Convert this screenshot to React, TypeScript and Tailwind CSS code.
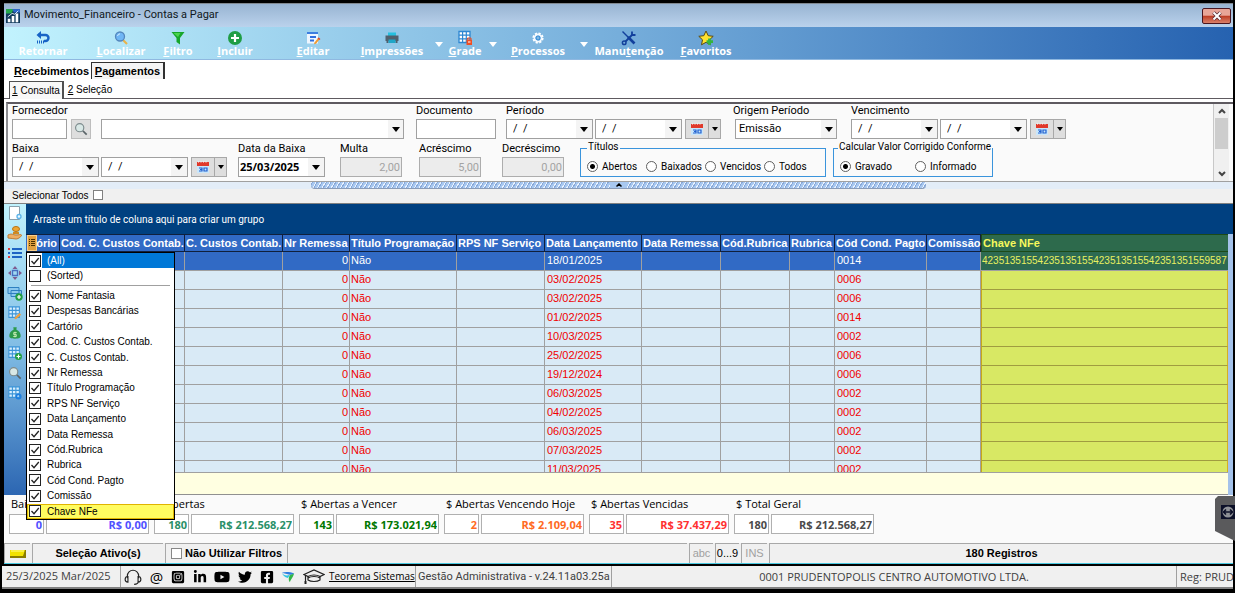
import { useState } from "react";
import type { ReactNode } from "react";
import { FaFacebookSquare, FaInstagramSquare, FaLinkedinIn, FaTwitter, FaYoutube } from "react-icons/fa";

const columns = [
    { title: "ório", width: 34 },
    { title: "Cod. C. Custos Contab.", width: 125 },
    { title: "C. Custos Contab.", width: 98 },
    { title: "Nr Remessa", width: 67 },
    { title: "Título Programação", width: 107 },
    { title: "RPS NF Serviço", width: 88 },
    { title: "Data Lançamento", width: 97 },
    { title: "Data Remessa", width: 79 },
    { title: "Cód.Rubrica", width: 69 },
    { title: "Rubrica", width: 45 },
    { title: "Cód Cond. Pagto", width: 92 },
    { title: "Comissão", width: 54 },
];

const rows = [
    { date: "18/01/2025", cond: "0014", key: "42351351554235135155423513515542351351559587" },
    { date: "03/02/2025", cond: "0006", key: "" },
    { date: "03/02/2025", cond: "0006", key: "" },
    { date: "01/02/2025", cond: "0014", key: "" },
    { date: "10/03/2025", cond: "0002", key: "" },
    { date: "25/02/2025", cond: "0006", key: "" },
    { date: "19/12/2024", cond: "0006", key: "" },
    { date: "06/03/2025", cond: "0002", key: "" },
    { date: "04/02/2025", cond: "0002", key: "" },
    { date: "06/03/2025", cond: "0002", key: "" },
    { date: "07/03/2025", cond: "0002", key: "" },
    { date: "11/03/2025", cond: "0002", key: "" },
];

const chooserItems = [
    "Nome Fantasia",
    "Despesas Bancárias",
    "Cartório",
    "Cod. C. Custos Contab.",
    "C. Custos Contab.",
    "Nr Remessa",
    "Título Programação",
    "RPS NF Serviço",
    "Data Lançamento",
    "Data Remessa",
    "Cód.Rubrica",
    "Rubrica",
    "Cód Cond. Pagto",
    "Comissão",
    "Chave NFe",
];

const totals = [
    { label: "Baixadas", count: "0", value: "R$ 0,00", color: "text-[#5050ff]" },
    { label: "$ Abertas", count: "180", value: "R$ 212.568,27", color: "text-[#2a9068]" },
    { label: "$ Abertas a Vencer", count: "143", value: "R$ 173.021,94", color: "text-[#007800]" },
    { label: "$ Abertas Vencendo Hoje", count: "2", value: "R$ 2.109,04", color: "text-[#ff6a1f]" },
    { label: "$ Abertas Vencidas", count: "35", value: "R$ 37.437,29", color: "text-[#ff3030]" },
    { label: "$ Total Geral", count: "180", value: "R$ 212.568,27", color: "text-[#4a4a4a]" },
];

/* ---------- icons ---------- */

function Arrow({ className = "" }: { className?: string }) {
    return (
        <svg viewBox="0 0 8 5" className={`h-[5px] w-2 shrink-0 ${className}`} fill="currentColor" aria-hidden="true">
            <path d="M0 0h8L4 5z" />
        </svg>
    );
}

function Svg({ children, className = "size-4" }: { children: ReactNode; className?: string }) {
    return (
        <svg viewBox="0 0 16 16" className={`shrink-0 ${className}`} fill="none" aria-hidden="true">
            {children}
        </svg>
    );
}

const BackIcon = () => (
    <Svg>
        <path d="M3 5h7.500a3 3 0 0 1 0 6H9" stroke="#1763c6" strokeWidth="2.400" />
        <path d="M6 1 1.500 5 6 9z" fill="#1763c6" />
        <path d="M2 12h7" stroke="#1763c6" strokeWidth="3" strokeDasharray="1 1" />
    </Svg>
);

const SearchIcon = () => (
    <Svg>
        <path d="m10 10 4 4" stroke="#e8b34b" strokeWidth="2.200" />
        <circle cx="7" cy="6.500" r="4.500" fill="#6fb6f5" stroke="#5487bd" strokeWidth="1.300" />
        <path d="M4.500 6A3 3 0 0 1 7 3.800" stroke="#d7ecff" />
    </Svg>
);

const LensIcon = ({ className = "size-4" }: { className?: string }) => (
    <Svg className={className}>
        <path d="m10 10 4.500 4.500" stroke="#5a6468" strokeWidth="2" />
        <circle cx="6.500" cy="6.500" r="4.700" fill="#d9e8e6" stroke="#7c8a8c" strokeWidth="1.300" />
    </Svg>
);

const FilterIcon = () => (
    <Svg>
        <path d="M1.500 2h13L10 8v6.500L6.500 12V8z" fill="#17a62b" />
        <path d="M3.500 3h7L8 7z" fill="#4bd44f" />
    </Svg>
);

const AddIcon = () => (
    <Svg>
        <circle cx="8" cy="8" r="7" fill="#1f9d45" />
        <path d="M8 4v8M4 8h8" stroke="#fff" strokeWidth="2.200" />
    </Svg>
);

const EditIcon = () => (
    <Svg>
        <path d="M2 2.500h11v11H2z" fill="#eef6ff" />
        <path d="M2 3h11" stroke="#3c7ee0" strokeWidth="2" />
        <path d="M5 7h6M5 10.500h4" stroke="#2f6fe0" strokeWidth="2" />
        <path d="m9.500 12.500 4-5 1.500 1.200-4 5-2 .6z" fill="#f39a2e" />
        <path d="m13 8 2 1.500" stroke="#d8473a" strokeWidth="1.500" />
    </Svg>
);

const PrintIcon = () => (
    <Svg>
        <path d="M4 2.500h8V6H4z" fill="#25c0e0" />
        <path d="M1.500 5.500h13V11h-13z" fill="#50606e" />
        <path d="M2.500 11h2v2h-2zM11.500 11h2v2h-2z" fill="#50606e" />
        <path d="M4.500 9.500h7V13h-7z" fill="#1fa6c8" />
    </Svg>
);

const GridLockIcon = () => (
    <Svg>
        <path d="M2 1.500h11v11H2z" fill="#fff" stroke="#2d87d2" strokeWidth="1.300" />
        <path d="M5.600 2v10M9.300 2v10M2 5.200h11M2 8.800h11" stroke="#2d87d2" strokeWidth="1.200" />
        <path d="M9.500 9.500h5.500V15H9.500z" fill="#f04e23" />
        <path d="M11 12h2.500" stroke="#fff" />
        <path d="M10.500 9.500V8h3.500v1.500" stroke="#f04e23" />
    </Svg>
);

const GearIcon = () => (
    <Svg>
        <circle cx="8" cy="8" r="4.600" stroke="#fff" strokeWidth="2" strokeDasharray="2.200 1.400" />
        <circle cx="8" cy="8" r="3.400" stroke="#f4faff" strokeWidth="2" />
        <circle cx="8" cy="8" r="2" stroke="#3b8fd8" strokeWidth="1.200" />
    </Svg>
);

const ToolsIcon = () => (
    <Svg>
        <path d="m7 7 6.500 6.500" stroke="#12409c" strokeWidth="2.600" />
        <path d="m1.500 1.500 6 6" stroke="#12409c" strokeWidth="1.400" />
        <path d="m4.500 11.500 7-7" stroke="#12409c" strokeWidth="1.800" />
        <path d="M11 1.500v3.500h3.500" stroke="#12409c" strokeWidth="1.800" />
        <circle cx="3.200" cy="12.800" r="1.800" stroke="#12409c" strokeWidth="1.500" />
    </Svg>
);

const StarIcon = () => (
    <Svg>
        <path d="m8 1 2.200 4.700 5 .6-3.700 3.500 1 5L8 12.300l-4.500 2.500 1-5L.8 6.300l5-.6z" fill="#ffe22e" stroke="#5b4a12" />
        <path d="M11.500 8.500v6.500M8.500 11.700H15" stroke="#33b540" strokeWidth="2.800" />
    </Svg>
);

const CalendarIcon = () => (
    <svg viewBox="0 0 12 13" className="h-[13px] w-3 shrink-0" aria-hidden="true">
        <path d="M0 1h12v4H0z" fill="#e0392b" />
        <path d="M1 1h10" stroke="#fff" strokeDasharray="1 1.500" />
        <path d="M0 5h12v7H0z" fill="#c9e6fa" />
        <path d="M2 7h3v3H2M3 8.500h2M7 7h3v3H7z" fill="none" stroke="#1f5fd0" strokeWidth="1.200" />
    </svg>
);

const LogoIcon = () => (
    <Svg className="size-[14px]">
        <path d="M0 0h16v16H0z" fill="#123a5c" />
        <path d="M0 0h9L6 5H0z" fill="#25a94c" />
        <path d="M7 0h9v4H9z" fill="#2c66c8" />
        <path d="M2 15v-4h3v4zM6.500 15V8h3v7zM11 15V5h3v10z" fill="#fff" />
        <path d="m2 9 5-4 3 1 4-4" stroke="#e9f4ff" />
    </Svg>
);

const HeadsetIcon = () => (
    <Svg className="size-[18px]">
        <path d="M3 9V7a5 5 0 0 1 10 0v2" stroke="#222" />
        <path d="M3.500 7.500C1.500 7.500 1 9 1 10s.7 2.500 2.500 2.500zM12.500 7.500c2 0 2.500 1.500 2.500 2.500s-.7 2.500-2.500 2.500zM12.500 12.500c0 1.500-1.500 2-3.500 2" stroke="#222" />
    </Svg>
);

const WingIcon = () => (
    <Svg className="size-[14px]">
        <path d="M1 3c4-1 9-1 14 1-1 1-3 1.500-5 1.500z" fill="#2f7de0" />
        <path d="M1 3c2 3 5 4 9 2.500L8 9C4 8 2 6 1 3z" fill="#2ec4e0" />
        <path d="M15 4c-1 4-4 7-5 10-2-3-1-6 0-8z" fill="#33b548" />
    </Svg>
);

const HatIcon = () => (
    <svg viewBox="0 0 22 16" className="h-4 w-[22px] shrink-0" fill="none" stroke="#222" aria-hidden="true">
        <path d="M1 5.500 11 1l10 4.500-4 2c-3-2-9-2-12 0z" strokeWidth="1.200" />
        <path d="M5 7.500v3.500c3 2 9 2 12 0V7.500M5 9c3-2 9-2 12 0M2.500 6v6" strokeWidth="1.200" />
        <path d="M2.500 12v3" strokeWidth="2" />
    </svg>
);

const TableIcon = ({ badge }: { badge?: string }) => (
    <Svg className="size-[14px]">
        <path d="M1 1h12v12H1z" fill="#d8efff" stroke="#3a94d8" strokeWidth="1.200" />
        <path d="M5 1v12M9 1v12M1 5h12M1 9h12" stroke="#3a94d8" strokeWidth="1.200" />
        {badge === "pencil" && <path d="m7 14 6-6 2 2-6 5z" fill="#ef9f3c" />}
        {badge === "add" && (
            <>
                <circle cx="12" cy="12" r="4" fill="#22a045" />
                <path d="M12 9.800v4.400M9.800 12h4.400" stroke="#fff" strokeWidth="1.300" />
            </>
        )}
        {badge === "gear" && <circle cx="12" cy="12" r="2.500" stroke="#1d7fe0" strokeWidth="2" />}
    </Svg>
);

const sideIcons: { name: string; icon: ReactNode }[] = [
    {
        name: "Novo",
        icon: (
            <Svg>
                <path d="M2.500 1.500h10v13h-10z" fill="#fff" stroke="#8aa0ac" />
                <circle cx="12" cy="11.500" r="2" fill="#e9f8ff" stroke="#5ab3ea" strokeWidth="1.300" />
            </Svg>
        ),
    },
    {
        name: "Baixar",
        icon: (
            <Svg>
                <ellipse cx="9" cy="4" rx="3.500" ry="2.500" fill="#eda634" stroke="#b87312" />
                <path d="M6 8h6" stroke="#d18a20" strokeWidth="2" />
                <path d="M1 10c4-2 5 0 8 0s5-1 5.500 0-3 4-5.500 4-5-1-8-1z" fill="#eeaf63" stroke="#bd7b35" />
            </Svg>
        ),
    },
    {
        name: "Lista",
        icon: (
            <Svg>
                <path d="M1 4h2M1 12h2" stroke="#e23b3b" strokeWidth="2" />
                <path d="M1 8h2M5 4h10M5 8h10M5 12h10" stroke="#1d63c4" strokeWidth="2" />
            </Svg>
        ),
    },
    {
        name: "Mover",
        icon: (
            <Svg>
                <path d="M5.500 5.500h5v5h-5z" stroke="#486fc0" strokeWidth="1.400" />
                <path d="m8 1 2.500 3h-5zM8 15l2.500-3h-5zM1 8l3-2.500v5zM15 8l-3-2.500v5z" fill="#7f5b8e" />
            </Svg>
        ),
    },
    {
        name: "Cheques",
        icon: (
            <Svg>
                <path d="M1 2.500h11v6H1zM4 5.500h10.500v6H4z" fill="#8bc8ee" stroke="#2d7fc0" />
                <circle cx="12" cy="12" r="3.700" fill="#22a045" />
                <path d="M12 10v4M10 12h4" stroke="#fff" strokeWidth="1.200" />
            </Svg>
        ),
    },
    { name: "Editar grade", icon: <TableIcon badge="pencil" /> },
    {
        name: "Valores",
        icon: (
            <Svg className="size-[14px]">
                <path d="M6 1.500h4L9.500 4c4 2 5 5 5 7.500 0 2-1.500 3-6.500 3s-6.500-1-6.500-3C1.500 9 2.500 6 6.500 4z" fill="#2d9a4b" />
                <path d="M10 7.500H6.500v2.300h3V12H6M8 6.500V13" stroke="#cdf0b8" />
            </Svg>
        ),
    },
    { name: "Adicionar grade", icon: <TableIcon badge="add" /> },
    { name: "Pesquisar", icon: <LensIcon className="size-[14px]" /> },
    { name: "Configurar grade", icon: <TableIcon badge="gear" /> },
];

/* ---------- toolbar ---------- */

function ToolButton({ icon, label, hot, className }: { icon: ReactNode; label: string; hot?: number; className: string }) {
    return (
        <button type="button" className={`flex h-full shrink-0 flex-col items-center pt-[3px] ${className}`}>
            {icon}
            <span className="font-['Open_Sans',sans-serif] text-[11px] leading-[9px] font-bold text-white">
                {hot === undefined ? (
                    label
                ) : (
                    <>
                        {label.slice(0, hot)}
                        <u>{label[hot]}</u>
                        {label.slice(hot + 1)}
                    </>
                )}
            </span>
        </button>
    );
}

function ToolArrow({ label, className }: { label: string; className: string }) {
    return (
        <button type="button" aria-label={label} className={`flex shrink-0 justify-center pt-[15px] text-white ${className}`}>
            <Arrow />
        </button>
    );
}

/* ---------- filter fields ---------- */

function DateCombo({ label, value = "/  /", bold }: { label: string; value?: string; bold?: boolean }) {
    return (
        <div className="flex h-5 w-[87px] shrink-0 border border-[#a0a0a0] bg-white">
            <input
                aria-label={label}
                defaultValue={value}
                className={
                    bold
                        ? "w-0 flex-1 bg-white pl-px font-['Open_Sans',sans-serif] text-[11px] font-bold"
                        : "w-0 flex-1 bg-white pl-[6px] text-[11px] whitespace-pre"
                }
            />
            <button type="button" aria-label={`Abrir ${label}`} className="flex w-4 items-center justify-center bg-[#f4f4f4]">
                <Arrow />
            </button>
        </div>
    );
}

function DateRange({ label }: { label: string }) {
    return (
        <div className="flex gap-[2px]">
            <DateCombo label={`${label} inicial`} />
            <DateCombo label={`${label} final`} />
            <div className="ml-px flex h-5 w-9 shrink-0 border border-[#a8a8a8] bg-[#dedede]">
                <button type="button" aria-label={`Calendário ${label}`} className="flex flex-1 items-center justify-center border-r border-[#a8a8a8]">
                    <CalendarIcon />
                </button>
                <button type="button" aria-label={`Opções ${label}`} className="flex w-[11px] items-center justify-center">
                    <svg viewBox="0 0 6 4" className="h-1 w-[6px]" aria-hidden="true">
                        <path d="M0 0h6L3 4z" />
                    </svg>
                </button>
            </div>
        </div>
    );
}

function Field({ label, htmlFor, className = "", children }: { label: string; htmlFor?: string; className?: string; children: ReactNode }) {
    return (
        <div className={`shrink-0 ${className}`}>
            <label htmlFor={htmlFor} className="block h-[15px] leading-[14px] whitespace-nowrap">
                {label}
            </label>
            {children}
        </div>
    );
}

function DisabledValue({ id, value }: { id: string; value: string }) {
    return (
        <input
            id={id}
            disabled
            defaultValue={value}
            className="block h-5 w-[62px] border border-[#adadad] bg-[#ececec] pr-px text-right text-[11px] text-[#a3a3a3]"
        />
    );
}

function RadioOption({ name, label, checked, className }: { name: string; label: string; checked?: boolean; className: string }) {
    return (
        <label className={`flex shrink-0 items-center gap-1 whitespace-nowrap ${className}`}>
            <input
                type="radio"
                name={name}
                defaultChecked={checked}
                className="size-[11px] shrink-0 appearance-none rounded-full border border-[#606060] bg-white checked:bg-[radial-gradient(circle,#000_2px,#fff_3px)]"
            />
            {label}
        </label>
    );
}

function SelectBox({ id, label, className, children }: { id: string; label?: string; className: string; children: ReactNode }) {
    return (
        <div className={`relative h-5 ${className}`}>
            <select id={id} aria-label={label} className="h-full w-full appearance-none border border-[#a0a0a0] bg-white pl-[3px] text-[11px]">
                {children}
            </select>
            <span className="pointer-events-none absolute inset-y-px right-px flex w-[15px] items-center justify-center bg-[#f4f4f4]">
                <Arrow />
            </span>
        </div>
    );
}

function Filters() {
    return (
        <section className="ml-[2px] flex h-[79px] shrink-0 border-t-2 border-l-2 border-t-[#5e5a60] border-l-[#8c8c90] bg-[#fafafa] font-[Roboto,sans-serif] text-[11px] text-black">
            <div className="min-w-0 flex-1 overflow-hidden pl-1">
                <div className="flex">
                    <Field label="Fornecedor" htmlFor="fornecedor">
                        <div className="flex">
                            <input id="fornecedor" className="h-5 w-[55px] border border-[#a0a0a0] bg-white" />
                            <button type="button" aria-label="Buscar fornecedor" className="ml-1 flex size-5 items-center justify-center border border-[#bdbdbd] bg-[#dedede]">
                                <LensIcon className="size-[14px]" />
                            </button>
                            <SelectBox id="nome" label="Nome do fornecedor" className="ml-[10px] w-[303px]">
                                <option></option>
                            </SelectBox>
                        </div>
                    </Field>
                    <Field label="Documento" htmlFor="documento" className="ml-3">
                        <input id="documento" className="block h-5 w-20 border border-[#a0a0a0] bg-white" />
                    </Field>
                    <Field label="Período" className="ml-[10px]">
                        <DateRange label="Período" />
                    </Field>
                    <Field label="Origem Período" htmlFor="origem" className="ml-3">
                        <SelectBox id="origem" className="ml-[2px] w-[102px]">
                            <option>Emissão</option>
                        </SelectBox>
                    </Field>
                    <Field label="Vencimento" className="ml-[14px]">
                        <DateRange label="Vencimento" />
                    </Field>
                </div>
                <div className="mt-[3px] flex">
                    <Field label="Baixa">
                        <DateRange label="Baixa" />
                    </Field>
                    <Field label="Data da Baixa" className="ml-[11px]">
                        <DateCombo label="Data da Baixa" value="25/03/2025" bold />
                    </Field>
                    <Field label="Multa" htmlFor="multa" className="ml-[15px]">
                        <DisabledValue id="multa" value="2,00" />
                    </Field>
                    <Field label="Acréscimo" htmlFor="acrescimo" className="ml-[17px]">
                        <DisabledValue id="acrescimo" value="5,00" />
                    </Field>
                    <Field label="Decréscimo" htmlFor="decrescimo" className="ml-[21px]">
                        <DisabledValue id="decrescimo" value="0,00" />
                    </Field>
                    <fieldset className="ml-4 flex h-[35px] w-[246px] shrink-0 border border-[#3a94dc] pl-[6px]">
                        <legend className="h-3 px-px text-[10px] leading-[10px]">Títulos</legend>
                        <div className="flex h-6 items-center text-[10px]">
                            <RadioOption name="titulos" label="Abertos" checked className="w-[59px]" />
                            <RadioOption name="titulos" label="Baixados" className="w-[59px]" />
                            <RadioOption name="titulos" label="Vencidos" className="w-[59px]" />
                            <RadioOption name="titulos" label="Todos" className="w-[55px]" />
                        </div>
                    </fieldset>
                    <fieldset className="ml-[7px] flex h-[35px] w-[156px] shrink-0 border border-[#3a94dc] pl-1">
                        <legend className="h-3 px-px text-[10px] leading-[10px] whitespace-nowrap">Calcular Valor Corrigido Conforme</legend>
                        <div className="flex h-6 items-center pl-[2px] text-[10px]">
                            <RadioOption name="calculo" label="Gravado" checked className="w-[75px]" />
                            <RadioOption name="calculo" label="Informado" className="w-[66px]" />
                        </div>
                    </fieldset>
                </div>
            </div>
            <div className="mr-1 flex w-4 shrink-0 flex-col items-center justify-between border-l border-[#c8c8c8] bg-[#f0f0f0] py-1">
                <svg viewBox="0 0 8 6" className="h-[6px] w-2" fill="none" stroke="#444" strokeWidth="2" aria-hidden="true">
                    <path d="m1 5 3-3 3 3" />
                </svg>
                <div className="mt-1 mb-auto h-[31px] w-[13px] bg-[#cdcdcd]" />
                <svg viewBox="0 0 8 6" className="h-[6px] w-2" fill="none" stroke="#444" strokeWidth="2" aria-hidden="true">
                    <path d="m1 1 3 3 3-3" />
                </svg>
            </div>
        </section>
    );
}

/* ---------- grid ---------- */

function Check({ label, checked, onChange, className = "", textClass = "" }: { label: string; checked: boolean; onChange: () => void; className?: string; textClass?: string }) {
    return (
        <label className={`flex items-center pl-[2px] ${className}`}>
            <span className="relative flex size-3 shrink-0">
                <input type="checkbox" checked={checked} onChange={onChange} className="size-3 appearance-none border border-[#222] bg-white" />
                {checked && (
                    <svg viewBox="0 0 12 12" className="pointer-events-none absolute inset-0 size-3" fill="none" stroke="#222" strokeWidth="1.300" aria-hidden="true">
                        <path d="m2.500 6 2.500 2.700L9.800 3" />
                    </svg>
                )}
            </span>
            <span className={`ml-px flex-1 self-stretch pl-[5px] ${textClass}`}>{label}</span>
        </label>
    );
}

function ColumnChooser() {
    const [off, setOff] = useState<string[]>(["(Sorted)"]);
    const toggle = (name: string) => setOff(off.includes(name) ? off.filter((n) => n !== name) : [...off, name]);

    return (
        <div className="absolute top-12 left-0 z-10 w-[149px] border border-black bg-white text-[10px] text-black">
            <Check label="(All)" checked={!off.includes("(All)")} onChange={() => toggle("(All)")} className="h-[15px] leading-[15px]" textClass="bg-[#0078d7] text-white" />
            <Check label="(Sorted)" checked={!off.includes("(Sorted)")} onChange={() => toggle("(Sorted)")} className="h-4 leading-4" />
            <hr className="mx-1 mt-px mb-[2px] border-[#a0a0a0]" />
            <div className="grid h-[231px] auto-rows-fr">
                {chooserItems.map((name) => (
                    <Check
                        key={name}
                        label={name}
                        checked={!off.includes(name)}
                        onChange={() => toggle(name)}
                        className={name === "Chave NFe" ? "bg-[#fffc60] leading-[15px] ring-1 ring-[#e0b400] ring-inset" : "leading-[15px]"}
                    />
                ))}
            </div>
        </div>
    );
}

function DataGrid() {
    return (
        <div className="relative flex min-w-0 flex-1 flex-col">
            <div className="flex h-[30px] shrink-0 items-center bg-[#004080] pl-[7px] font-[Roboto,sans-serif] text-[10px] text-white">
                Arraste um título de coluna aqui para criar um grupo
            </div>
            <button
                type="button"
                aria-label="Escolher colunas"
                className="absolute top-[31px] left-px z-10 flex h-4 w-[10px] items-center justify-center border border-[#fbd08a] bg-[#e0a040]"
            >
                <svg viewBox="0 0 6 10" className="h-[10px] w-[6px]" stroke="#4a3000" aria-hidden="true">
                    <path d="M0 1.500h1M2 1.500h4M0 3.500h1M2 3.500h4M0 5.500h1M2 5.500h4M0 7.500h1M2 7.500h4" />
                </svg>
            </button>
            <ColumnChooser />
            <div className="flex min-h-0 flex-1 bg-[#a4c2ea]">
                <div className="flex min-w-0 flex-1 flex-col">
                    <div className="min-h-0 flex-1 overflow-hidden border-b border-[#a0a0a0]">
                        <table className="w-full table-fixed border-separate border-spacing-0 text-[11px] leading-[17px] whitespace-nowrap">
                            <colgroup>
                                {columns.map((c) => (
                                    <col key={c.title} style={{ width: c.width }} />
                                ))}
                                <col />
                            </colgroup>
                            <thead>
                                <tr className="h-[18px] bg-[#316ac5] text-left leading-4 text-white">
                                    {columns.map((c, i) => (
                                        <th
                                            key={c.title}
                                            className={
                                                i === 0
                                                    ? "border-y border-r border-[#10203c] pr-[2px] text-right"
                                                    : "border-y border-r border-[#10203c] pl-px"
                                            }
                                        >
                                            {c.title}
                                        </th>
                                    ))}
                                    <th className="border-y border-l border-[#1c4a18] bg-[#2d6a4c] pl-px text-[#f6f85c]">Chave NFe</th>
                                </tr>
                            </thead>
                            <tbody>
                                {rows.map((row, i) => (
                                    <tr
                                        key={i}
                                        className={
                                            i === 0
                                                ? "h-[19px] bg-[#316ac5] align-top text-white [&>td]:border-b [&>td]:border-[#a0a0a0] [&>td:not(:last-child)]:border-r"
                                                : "h-[19px] bg-[#d9eaf6] align-top text-[#f00000] [&>td]:border-r [&>td]:border-b [&>td]:border-[#a0a0a0]"
                                        }
                                    >
                                        <td></td>
                                        <td></td>
                                        <td></td>
                                        <td className="pr-px text-right">0</td>
                                        <td className="pl-px">Não</td>
                                        <td></td>
                                        <td className="pl-[2px]">{row.date}</td>
                                        <td></td>
                                        <td></td>
                                        <td></td>
                                        <td className="pl-[2px]">{row.cond}</td>
                                        <td></td>
                                        <td
                                            className={
                                                i === 0
                                                    ? "bg-[#2d6a52] pl-px text-[10px] text-[#e8f060]"
                                                    : "border-l border-l-[#c8a818]! bg-[#d8e864] border-r-[#d8b020]! border-b-[#a09c40]!"
                                            }
                                        >
                                            {row.key}
                                        </td>
                                    </tr>
                                ))}
                            </tbody>
                        </table>
                    </div>
                    <div className="h-[22px] shrink-0 border-b border-[#909090] bg-[#ffffe1]" />
                </div>
                <div className="w-[5px] shrink-0" />
            </div>
        </div>
    );
}

/* ---------- status bars ---------- */

function Totals() {
    return (
        <section className="flex h-12 shrink-0 gap-[5px] overflow-hidden bg-[#fafafa] pl-[5px] font-['Open_Sans',sans-serif] text-[11px]">
            {totals.map((t) => (
                <div key={t.label} className="w-[140px] shrink-0">
                    <div className="h-[19px] pl-[2px] leading-[17px] whitespace-nowrap text-black">{t.label}</div>
                    <div className={`flex gap-[2px] ${t.color}`}>
                        <input aria-label={`${t.label} quantidade`} readOnly value={t.count} className="h-5 w-[35px] border border-[#b0b0b0] bg-white pr-px text-right font-bold" />
                        <input aria-label={`${t.label} valor`} readOnly value={t.value} className="h-5 w-[103px] border border-[#b0b0b0] bg-white pr-px text-right font-bold" />
                    </div>
                </div>
            ))}
        </section>
    );
}

function StatusBar() {
    return (
        <div className="flex h-[21px] shrink-0 gap-[2px] border-b border-[#48c8e0] bg-[#f0f0f0] text-[11px] text-black *:border-t *:border-l *:border-[#a8a8a8]">
            <button type="button" aria-label="Legenda" className="flex w-[26px] shrink-0 items-center justify-center">
                <svg viewBox="0 0 16 8" className="h-2 w-4" aria-hidden="true">
                    <path d="M0 0h16v8H0z" fill="#8a7c00" />
                    <path d="M0 0h15L13 6H0z" fill="#f2e200" />
                    <path d="M1 1h13" stroke="#fffb90" />
                </svg>
            </button>
            <div className="w-[131px] shrink-0 text-center leading-[18px] font-bold">Seleção Ativo(s)</div>
            <label className="flex w-[120px] shrink-0 items-center gap-[3px] pl-[5px] font-bold whitespace-nowrap">
                <input type="checkbox" className="size-[11px] appearance-none border border-[#888] bg-white" />
                Não Utilizar Filtros
            </label>
            <div className="w-[400px] shrink-0"></div>
            <div className="w-6 shrink-0 text-center leading-[18px] text-[#a0a0a0]">abc</div>
            <div className="w-6 shrink-0 text-center leading-[18px]">0...9</div>
            <div className="w-[26px] shrink-0 text-center leading-[18px] text-[#a0a0a0]">INS</div>
            <div className="min-w-0 flex-1 text-center leading-[18px] font-bold">180 Registros</div>
        </div>
    );
}

function Footer() {
    return (
        <footer className="mt-[2px] mr-[2px] ml-[2px] flex h-[23px] shrink-0 items-center overflow-hidden border-b-2 border-[#808080] bg-[#f0f0f0] font-['Open_Sans',sans-serif] text-[11px] whitespace-nowrap text-[#404040]">
            <div className="w-[119px] shrink-0 self-stretch border-r border-[#a0a0a0] pl-1 leading-5">25/3/2025 Mar/2025</div>
            <nav className="flex w-[206px] shrink-0 items-center justify-between pr-[2px] pl-[3px] text-black">
                <a href="#suporte" aria-label="Suporte"><HeadsetIcon /></a>
                <a href="#email" aria-label="E-mail" className="text-[15px] leading-4">@</a>
                <a href="#instagram" aria-label="Instagram"><FaInstagramSquare className="size-[14px]" /></a>
                <a href="#linkedin" aria-label="LinkedIn"><FaLinkedinIn className="size-[14px]" /></a>
                <a href="#youtube" aria-label="YouTube"><FaYoutube className="size-4" /></a>
                <a href="#twitter" aria-label="Twitter"><FaTwitter className="size-[14px]" /></a>
                <a href="#facebook" aria-label="Facebook"><FaFacebookSquare className="size-[14px]" /></a>
                <a href="#portal" aria-label="Portal"><WingIcon /></a>
                <a href="#ead" aria-label="Treinamento"><HatIcon /></a>
            </nav>
            <a href="#teorema" className="w-[88px] shrink-0 pl-[2px] text-[10px] text-black underline">Teorema Sistemas</a>
            <div className="w-[197px] shrink-0 self-stretch border-x border-[#a0a0a0] pl-[2px] font-[Roboto,sans-serif] leading-[22px]">Gestão Administrativa - v.24.11a03.25a</div>
            <div className="min-w-0 flex-1 text-center leading-5">0001 PRUDENTOPOLIS CENTRO AUTOMOTIVO LTDA.</div>
            <div className="w-[57px] shrink-0 self-stretch overflow-hidden border-l border-[#a0a0a0] pl-[3px] leading-[22px]">Reg: PRUDENTOPOLIS</div>
        </footer>
    );
}

export default function App() {
    return (
        <div className="relative flex h-screen w-full flex-col overflow-hidden bg-black pt-[3px] pb-1 font-['Liberation_Sans',Arial,sans-serif]">
            <div className="mr-[2px] ml-1 flex min-h-0 flex-1 flex-col bg-white">
                <header className="flex h-6 shrink-0 items-center border-t border-[#808890] bg-linear-to-b from-[#98b4d2] to-[#bad2ec] pr-[2px] pl-[2px]">
                    <LogoIcon />
                    <h1 className="ml-1 flex-1 font-[Roboto,sans-serif] text-[11px] text-[#101820]">Movimento_Financeiro - Contas a Pagar</h1>
                    <button
                        type="button"
                        aria-label="Fechar"
                        className="flex h-4 w-[29px] items-center justify-center rounded-xs border border-[#4a1620] bg-linear-to-b from-[#e8a598] from-45% via-[#bc3a22] via-50% to-[#d9806a]"
                    >
                        <svg viewBox="0 0 12 10" className="h-[10px] w-3" fill="none" aria-hidden="true">
                            <path d="m2.500 1.500 7 7M9.500 1.500l-7 7" stroke="#5a3038" strokeWidth="3.600" />
                            <path d="m2.500 1.500 7 7M9.500 1.500l-7 7" stroke="#fff" strokeWidth="2" />
                        </svg>
                    </button>
                </header>

                <div className="flex h-[33px] shrink-0 border-b border-[#8fb8e0] bg-linear-to-r from-[#c2f3fe] via-[#76aedb] to-[#2662b0]">
                    <ToolButton icon={<BackIcon />} label="Retornar" className="w-[78px]" />
                    <ToolButton icon={<SearchIcon />} label="Localizar" hot={0} className="w-[78px]" />
                    <ToolButton icon={<FilterIcon />} label="Filtro" hot={0} className="w-9" />
                    <ToolButton icon={<AddIcon />} label="Incluir" hot={0} className="w-[78px]" />
                    <ToolButton icon={<EditIcon />} label="Editar" hot={0} className="w-[78px]" />
                    <ToolButton icon={<PrintIcon />} label="Impressões" hot={0} className="w-20" />
                    <ToolArrow label="Opções de impressão" className="w-[13px]" />
                    <ToolButton icon={<GridLockIcon />} label="Grade" hot={0} className="w-10" />
                    <ToolArrow label="Opções de grade" className="w-[15px]" />
                    <ToolButton icon={<GearIcon />} label="Processos" hot={0} className="w-[76px]" />
                    <ToolArrow label="Opções de processos" className="w-4" />
                    <ToolButton icon={<ToolsIcon />} label="Manutenção" hot={4} className="w-[74px]" />
                    <ToolButton icon={<StarIcon />} label="Favoritos" hot={0} className="w-20" />
                </div>

                <div className="flex h-[19px] shrink-0 items-end pl-2 text-[11px] font-bold text-black">
                    <button type="button" className="h-[17px] w-[79px] leading-4">
                        <u>R</u>ecebimentos
                    </button>
                    <button type="button" className="h-[17px] w-[74px] border-t border-r-2 border-l border-[#303030] bg-[#f4f4f4] leading-4">
                        <u>P</u>agamentos
                    </button>
                </div>
                <div className="flex h-5 shrink-0 items-end border-b border-[#5e5a60] pl-[5px] text-[10px] text-black">
                    <button type="button" className="-mb-px h-[18px] w-[55px] border-t border-r-2 border-l border-[#505050] bg-[#f8f8f8]">
                        <u>1</u> Consulta
                    </button>
                    <button type="button" className="h-[17px] w-[52px]">
                        <u>2</u> Seleção
                    </button>
                </div>
                <div className="h-[3px] shrink-0" />

                <Filters />

                <div className="flex h-2 shrink-0 justify-center border-t border-[#a0a0a0] bg-[#e3edf8]">
                    <div className="flex h-[7px] w-1/2 justify-center rounded-b-sm border-b border-[#8a9cb8] bg-[#a8c8f0] bg-[repeating-linear-gradient(120deg,#e8f2ff_0_1px,#88a8d8_1px_2px,#a8c8f0_2px_4px)]">
                        <button type="button" aria-label="Recolher filtros" className="flex h-[6px] w-[17px] items-center justify-center bg-[#a8c8f0]">
                            <svg viewBox="0 0 6 4" className="h-1 w-[6px]" fill="none" stroke="#000" strokeWidth="1.500" aria-hidden="true">
                                <path d="m.5 3.500 2.500-2.500 2.500 2.500" />
                            </svg>
                        </button>
                    </div>
                </div>
                <label className="flex h-[15px] shrink-0 items-center gap-1 border-b border-[#808080] bg-[#f0f0f0] pb-[2px] pl-2 text-[10px] text-black">
                    Selecionar Todos
                    <input type="checkbox" className="size-[10px] appearance-none border border-[#808080] bg-white" />
                </label>

                <div className="flex min-h-0 flex-1">
                    <aside className="flex w-[22px] shrink-0 flex-col items-center gap-1 bg-linear-to-b from-[#c0f2fd] via-[#80bce4] to-[#2c66b2] pt-px">
                        {sideIcons.map((s) => (
                            <button key={s.name} type="button" aria-label={s.name} className="flex h-4 w-full items-center justify-center">
                                {s.icon}
                            </button>
                        ))}
                    </aside>
                    <DataGrid />
                </div>

                <Totals />
                <StatusBar />
            </div>
            <Footer />

            <button type="button" aria-label="Acesso remoto" className="absolute right-0 bottom-[52px] z-10">
                <svg viewBox="0 0 20 45" className="h-[45px] w-5" fill="none" aria-hidden="true">
                    <path d="M20 0H3L0 3v32l20 10z" fill="#5a5a5c" />
                    <path d="M6 9h14v14H6z" fill="#0c1028" />
                    <circle cx="13" cy="16" r="5.500" fill="#8f9196" />
                    <path d="M9 16h8M11 13.500 8.500 16l2.500 2.500M15 13.500l2.500 2.500-2.500 2.500" stroke="#0c1028" strokeWidth="1.600" />
                </svg>
            </button>
        </div>
    );
}
